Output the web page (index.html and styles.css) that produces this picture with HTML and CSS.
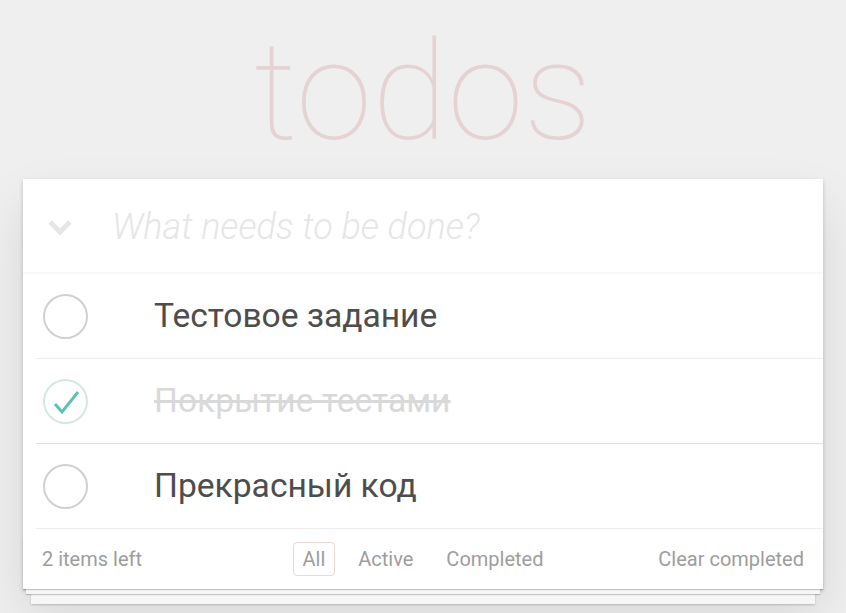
FILE: index.html
```html
<!DOCTYPE html>
<html lang="ru">
<head>
<meta charset="utf-8">
<title>todos</title>
<link rel="stylesheet" href="styles.css">
</head>
<body>
<section class="todoapp">
  <h1 class="title">todos</h1>
  <div class="card">
    <header class="new-row">
      <span class="toggle-all">
        <svg width="24" height="16" viewBox="0 0 24 16"><path d="M2 3 L12 13 L22 3" fill="none" stroke="#e6e6e6" stroke-width="5"/></svg>
      </span>
      <input class="new-todo" placeholder="What needs to be done?">
    </header>
    <ul class="todo-list">
      <li class="todo">
        <span class="check"><svg width="45" height="45" viewBox="0 0 45 45"><circle cx="22.5" cy="22.5" r="21.5" fill="none" stroke="#d0d0d0" stroke-width="2"/></svg></span>
        <label class="label">Тестовое задание</label>
      </li>
      <li class="todo done">
        <span class="check"><svg width="45" height="45" viewBox="0 0 45 45"><circle cx="22.5" cy="22.5" r="21.5" fill="none" stroke="#d3e8e3" stroke-width="2"/><path d="M12 25 L19 33 L35 13" fill="none" stroke="#5dc2af" stroke-width="3"/></svg></span>
        <label class="label">Покрытие тестами</label>
      </li>
      <li class="todo">
        <span class="check"><svg width="45" height="45" viewBox="0 0 45 45"><circle cx="22.5" cy="22.5" r="21.5" fill="none" stroke="#d0d0d0" stroke-width="2"/></svg></span>
        <label class="label">Прекрасный код</label>
      </li>
    </ul>
    <footer class="footer">
      <span class="count">2 items left</span>
      <ul class="filters">
        <li><a class="filter selected">All</a></li>
        <li><a class="filter">Active</a></li>
        <li><a class="filter">Completed</a></li>
      </ul>
      <span class="clear">Clear completed</span>
    </footer>
  </div>
</section>
</body>
</html>
```

FILE: styles.css
```css
html, body {
  margin: 0;
  padding: 0;
}
body {
  background: #efefef;
  font-family: Roboto, "Liberation Sans", Arial, sans-serif;
  color: #4d4d4d;
}
.todoapp {
  width: 800px;
  margin: 0 auto 40px;
  padding-top: 1px;
}
.title {
  margin: 22px 0 18px;
  font-size: 138px;
  line-height: 138px;
  font-weight: 100;
  text-align: center;
  color: rgba(175, 47, 47, 0.15);
}
.card {
  position: relative;
  background: #fff;
  box-shadow: 0 2px 4px 0 rgba(0, 0, 0, 0.2), 0 25px 50px 0 rgba(0, 0, 0, 0.1);
}
.new-row {
  display: flex;
  align-items: center;
  height: 95px;
  box-shadow: inset 0 -2px 1px rgba(0, 0, 0, 0.03);
}
.toggle-all {
  display: flex;
  margin-left: 25px;
  margin-top: 1px;
  width: 24px;
  height: 16px;
}
.new-todo {
  flex: 1;
  margin-left: 40px;
  border: none;
  outline: none;
  padding: 0;
  background: transparent;
  font-family: Roboto, "Liberation Sans", Arial, sans-serif;
  font-size: 36px;
  font-weight: 300;
  font-style: italic;
  color: #4d4d4d;
}
.new-todo::placeholder {
  color: #e6e6e6;
  font-style: italic;
  font-weight: 300;
}
.todo-list {
  list-style: none;
  margin: 0 0 0 13px;
  padding: 0;
}
.todo {
  display: flex;
  align-items: center;
  height: 84px;
  border-bottom: 1px solid #ededed;
}
.todo.done {
  border-bottom-color: #d2e4e0;
}
.check {
  display: flex;
  margin-left: 7px;
  width: 45px;
  height: 45px;
}
.label {
  margin-left: 66px;
  font-size: 33.6px;
  font-weight: 400;
  line-height: 1.2;
  color: #4d4d4d;
}
.done .label {
  color: #d9d9d9;
  text-decoration: line-through;
}
.footer {
  position: relative;
  display: grid;
  grid-template-columns: 1fr auto 1fr;
  align-items: center;
  height: 60px;
  padding: 0 19px;
  font-size: 20px;
  color: #9d9d9d;
}
.footer::before {
  content: "";
  position: absolute;
  left: 0;
  right: 0;
  bottom: 0;
  height: 50px;
  overflow: hidden;
  box-shadow: 0 1px 1px rgba(0, 0, 0, 0.2),
    0 8px 0 -3px #f6f6f6,
    0 9px 1px -3px rgba(0, 0, 0, 0.2),
    0 23px 0 -8px #f6f6f6,
    0 24px 2px -8px rgba(0, 0, 0, 0.2);
}
.count, .filters, .clear {
  position: relative;
}
.count {
  justify-self: start;
}
.filters {
  list-style: none;
  margin: 0;
  padding: 0;
  white-space: nowrap;
}
.filters li {
  display: inline;
}
.filter {
  display: inline-block;
  margin: 4px;
  padding: 4px 9px;
  line-height: 1.2;
  border: 1.4px solid transparent;
  border-radius: 4px;
  color: #9d9d9d;
}
.filter.selected {
  border-color: rgba(175, 47, 47, 0.2);
}
.clear {
  justify-self: end;
}
```
